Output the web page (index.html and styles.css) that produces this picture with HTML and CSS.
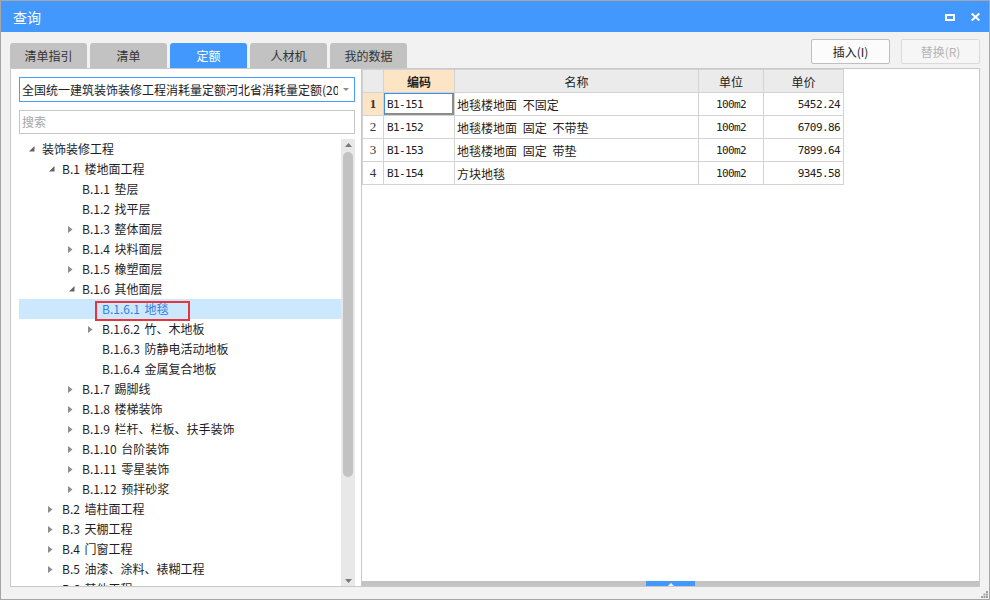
FILE: index.html
```html
<!DOCTYPE html>
<html lang="zh-CN">
<head>
<meta charset="utf-8">
<title>查询</title>
<link rel="stylesheet" href="styles.css">
</head>
<body>
<div class="window">
  <div class="titlebar">
    <span class="title">查询</span>
    <div class="win-ctrls">
      <svg width="10" height="7" viewBox="0 0 10 7"><rect x="1" y="1" width="8" height="5" fill="none" stroke="#fff" stroke-width="2"/></svg>
      <svg width="9" height="8" viewBox="0 0 9 8"><path d="M0.7 0.5 L8.3 7.5 M8.3 0.5 L0.7 7.5" stroke="#fff" stroke-width="2"/></svg>
    </div>
  </div>
  <div class="toolbar">
    <div class="tabs">
      <div class="tab">清单指引</div>
      <div class="tab">清单</div>
      <div class="tab active">定额</div>
      <div class="tab">人材机</div>
      <div class="tab">我的数据</div>
    </div>
    <div class="actions">
      <button class="btn">插入(I)</button>
      <button class="btn disabled">替换(R)</button>
    </div>
  </div>
  <div class="main">
    <div class="left">
      <div class="select">
        <span class="select-text">全国统一建筑装饰装修工程消耗量定额河北省消耗量定额(2012)</span>
        <svg class="caret" width="6" height="3" viewBox="0 0 6 3"><polygon points="0,0 6,0 3,3" fill="#8a8a8a"/></svg>
      </div>
      <div class="search">搜索</div>
      <div class="tree">
        <div class="tree-list">
          <div class="row l0"><span class="arr"><svg width="6" height="6" viewBox="0 0 6 6"><polygon points="5.5,0 5.5,5.5 0,5.5" fill="#646464"/></svg></span><span class="lbl">装饰装修工程</span></div>
          <div class="row l1"><span class="arr"><svg width="6" height="6" viewBox="0 0 6 6"><polygon points="5.5,0 5.5,5.5 0,5.5" fill="#646464"/></svg></span><span class="lbl">B.1 楼地面工程</span></div>
          <div class="row l2"><span class="arr"></span><span class="lbl">B.1.1 垫层</span></div>
          <div class="row l2"><span class="arr"></span><span class="lbl">B.1.2 找平层</span></div>
          <div class="row l2"><span class="arr"><svg class="col" width="5" height="7" viewBox="0 0 5 7"><polygon points="0,0 4.5,3.5 0,7" fill="#8c8c8c"/></svg></span><span class="lbl">B.1.3 整体面层</span></div>
          <div class="row l2"><span class="arr"><svg class="col" width="5" height="7" viewBox="0 0 5 7"><polygon points="0,0 4.5,3.5 0,7" fill="#8c8c8c"/></svg></span><span class="lbl">B.1.4 块料面层</span></div>
          <div class="row l2"><span class="arr"><svg class="col" width="5" height="7" viewBox="0 0 5 7"><polygon points="0,0 4.5,3.5 0,7" fill="#8c8c8c"/></svg></span><span class="lbl">B.1.5 橡塑面层</span></div>
          <div class="row l2"><span class="arr"><svg width="6" height="6" viewBox="0 0 6 6"><polygon points="5.5,0 5.5,5.5 0,5.5" fill="#646464"/></svg></span><span class="lbl">B.1.6 其他面层</span></div>
          <div class="row l3 selected"><span class="arr"></span><span class="lbl">B.1.6.1 地毯</span><span class="mark"></span></div>
          <div class="row l3"><span class="arr"><svg class="col" width="5" height="7" viewBox="0 0 5 7"><polygon points="0,0 4.5,3.5 0,7" fill="#8c8c8c"/></svg></span><span class="lbl">B.1.6.2 竹、木地板</span></div>
          <div class="row l3"><span class="arr"></span><span class="lbl">B.1.6.3 防静电活动地板</span></div>
          <div class="row l3"><span class="arr"></span><span class="lbl">B.1.6.4 金属复合地板</span></div>
          <div class="row l2"><span class="arr"><svg class="col" width="5" height="7" viewBox="0 0 5 7"><polygon points="0,0 4.5,3.5 0,7" fill="#8c8c8c"/></svg></span><span class="lbl">B.1.7 踢脚线</span></div>
          <div class="row l2"><span class="arr"><svg class="col" width="5" height="7" viewBox="0 0 5 7"><polygon points="0,0 4.5,3.5 0,7" fill="#8c8c8c"/></svg></span><span class="lbl">B.1.8 楼梯装饰</span></div>
          <div class="row l2"><span class="arr"><svg class="col" width="5" height="7" viewBox="0 0 5 7"><polygon points="0,0 4.5,3.5 0,7" fill="#8c8c8c"/></svg></span><span class="lbl">B.1.9 栏杆、栏板、扶手装饰</span></div>
          <div class="row l2"><span class="arr"><svg class="col" width="5" height="7" viewBox="0 0 5 7"><polygon points="0,0 4.5,3.5 0,7" fill="#8c8c8c"/></svg></span><span class="lbl">B.1.10 台阶装饰</span></div>
          <div class="row l2"><span class="arr"><svg class="col" width="5" height="7" viewBox="0 0 5 7"><polygon points="0,0 4.5,3.5 0,7" fill="#8c8c8c"/></svg></span><span class="lbl">B.1.11 零星装饰</span></div>
          <div class="row l2"><span class="arr"><svg class="col" width="5" height="7" viewBox="0 0 5 7"><polygon points="0,0 4.5,3.5 0,7" fill="#8c8c8c"/></svg></span><span class="lbl">B.1.12 预拌砂浆</span></div>
          <div class="row l1"><span class="arr"><svg class="col" width="5" height="7" viewBox="0 0 5 7"><polygon points="0,0 4.5,3.5 0,7" fill="#8c8c8c"/></svg></span><span class="lbl">B.2 墙柱面工程</span></div>
          <div class="row l1"><span class="arr"><svg class="col" width="5" height="7" viewBox="0 0 5 7"><polygon points="0,0 4.5,3.5 0,7" fill="#8c8c8c"/></svg></span><span class="lbl">B.3 天棚工程</span></div>
          <div class="row l1"><span class="arr"><svg class="col" width="5" height="7" viewBox="0 0 5 7"><polygon points="0,0 4.5,3.5 0,7" fill="#8c8c8c"/></svg></span><span class="lbl">B.4 门窗工程</span></div>
          <div class="row l1"><span class="arr"><svg class="col" width="5" height="7" viewBox="0 0 5 7"><polygon points="0,0 4.5,3.5 0,7" fill="#8c8c8c"/></svg></span><span class="lbl">B.5 油漆、涂料、裱糊工程</span></div>
          <div class="row l1"><span class="arr"><svg class="col" width="5" height="7" viewBox="0 0 5 7"><polygon points="0,0 4.5,3.5 0,7" fill="#8c8c8c"/></svg></span><span class="lbl">B.6 其他工程</span></div>
        </div>
        <div class="vscroll">
          <svg class="sarrow up" width="7" height="4" viewBox="0 0 7 4"><polygon points="3.5,0 7,4 0,4" fill="#787878"/></svg>
          <div class="thumb"></div>
          <svg class="sarrow down" width="7" height="4" viewBox="0 0 7 4"><polygon points="0,0 7,0 3.5,4" fill="#787878"/></svg>
        </div>
      </div>
    </div>
    <div class="right">
      <div class="grid">
        <div class="cell hdr"></div>
        <div class="cell hdr sel">编码</div>
        <div class="cell hdr">名称</div>
        <div class="cell hdr">单位</div>
        <div class="cell hdr">单价</div>

        <div class="cell num cur">1</div>
        <div class="cell code focus">B1-151</div>
        <div class="cell name">地毯楼地面 不固定</div>
        <div class="cell unit">100m2</div>
        <div class="cell price">5452.24</div>

        <div class="cell num">2</div>
        <div class="cell code">B1-152</div>
        <div class="cell name">地毯楼地面 固定 不带垫</div>
        <div class="cell unit">100m2</div>
        <div class="cell price">6709.86</div>

        <div class="cell num">3</div>
        <div class="cell code">B1-153</div>
        <div class="cell name">地毯楼地面 固定 带垫</div>
        <div class="cell unit">100m2</div>
        <div class="cell price">7899.64</div>

        <div class="cell num">4</div>
        <div class="cell code">B1-154</div>
        <div class="cell name">方块地毯</div>
        <div class="cell unit">100m2</div>
        <div class="cell price">9345.58</div>
      </div>
      <div class="hbar">
        <div class="hbar-handle"><svg width="6" height="3" viewBox="0 0 6 3"><polygon points="3,0 6,3 0,3" fill="#fff"/></svg></div>
      </div>
    </div>
  </div>
  <div class="footer">
    <svg class="grip" width="7" height="7" viewBox="0 0 7 7"><g fill="#a3a3a3"><rect x="5" y="0" width="2" height="2"/><rect x="2.5" y="2.5" width="2" height="2"/><rect x="5" y="2.5" width="2" height="2"/><rect x="0" y="5" width="2" height="2"/><rect x="2.5" y="5" width="2" height="2"/><rect x="5" y="5" width="2" height="2"/></g></svg>
  </div>
</div>
</body>
</html>
```

FILE: styles.css
```css
* { box-sizing: border-box; }
html, body { margin: 0; padding: 0; }
body {
  width: 990px;
  height: 600px;
  overflow: hidden;
  font-family: "Noto Sans CJK SC", "Microsoft YaHei", sans-serif;
  font-size: 12px;
  color: #222;
  background: #f2f2f2;
}
.window {
  width: 990px;
  height: 600px;
  border: 1px solid #a6a6a6;
  display: flex;
  flex-direction: column;
  background: #f2f2f2;
}
.titlebar {
  height: 31px;
  flex: none;
  background: #4398fd;
  color: #fff;
  display: flex;
  align-items: center;
  justify-content: space-between;
  padding: 0 9px 0 12px;
}
.title { font-size: 14px; line-height: 1; }
.win-ctrls { display: flex; align-items: center; gap: 16px; padding-top: 1px; }
.win-ctrls svg { display: block; }

.toolbar {
  height: 36px;
  flex: none;
  display: flex;
  justify-content: space-between;
  padding: 0 9px;
}
.tabs { display: flex; gap: 3px; align-self: flex-end; }
.tab {
  width: 77px;
  height: 25px;
  background: #c2c2c2;
  border-radius: 3px 3px 0 0;
  display: flex;
  align-items: center;
  justify-content: center;
  font-size: 12px;
  color: #333;
}
.tab.active { background: #4398fd; color: #fff; }
.actions { display: flex; gap: 11px; padding-top: 7px; }
.btn {
  width: 79px;
  height: 25px;
  border: 1px solid #bfbfbf;
  border-radius: 2px;
  background: #fcfcfc;
  font-family: inherit;
  font-size: 12px;
  color: #222;
  padding: 0;
}
.btn.disabled { border-color: #dadada; color: #b4b4b4; background: #f6f6f6; }

.main {
  height: 519px;
  flex: none;
  margin: 0 9px;
  display: flex;
}
.left {
  width: 351px;
  background: #fff;
  border: 1px solid #c8c8c8;
  border-right: none;
  padding: 8px 6px 0 8px;
  display: flex;
  flex-direction: column;
}
.select {
  height: 25px;
  flex: none;
  border: 1px solid #4a9bf5;
  display: flex;
  align-items: center;
  padding-left: 2px;
}
.select-text {
  width: 316px;
  overflow: hidden;
  white-space: nowrap;
  color: #222;
}
.caret { margin-left: auto; margin-right: 5px; display: block; }
.search {
  margin-top: 8px;
  height: 24px;
  flex: none;
  border: 1px solid #c6c6c6;
  padding-left: 2px;
  line-height: 22px;
  color: #a6a6a6;
}
.tree {
  margin-top: 5px;
  flex: 1;
  display: flex;
  overflow: hidden;
}
.tree-list { flex: 1; overflow: hidden; }
.row {
  height: 20px;
  display: flex;
  align-items: center;
  white-space: nowrap;
  position: relative;
  color: #1e1e1e;
}
.row.l0 { padding-left: 10px; }
.row.l1 { padding-left: 30px; }
.row.l2 { padding-left: 50px; }
.row.l3 { padding-left: 70px; }
.arr { width: 13px; height: 20px; flex: none; display: flex; align-items: center; }
.arr svg { display: block; }
.arr svg.col { margin-left: -1px; }
.lbl { line-height: 20px; word-spacing: 2px; }
.row.selected { background: #cce8ff; }
.row.selected .lbl { color: #2f80e6; }
.mark {
  position: absolute;
  left: 76px;
  top: 2px;
  width: 95px;
  height: 20px;
  border: 2px solid #e8353d;
}
.vscroll {
  width: 14px;
  flex: none;
  background: #e8e8e8;
  display: flex;
  flex-direction: column;
  align-items: center;
}
.sarrow { display: block; flex: none; }
.sarrow.up { margin-top: 4px; }
.sarrow.down { margin-top: auto; margin-bottom: 3px; }
.thumb {
  margin-top: 5px;
  width: 10px;
  height: 325px;
  border-radius: 5px;
  background: #c2c2c2;
}

.right {
  width: 619px;
  background: #fff;
  border: 1px solid #c8c8c8;
  display: flex;
  flex-direction: column;
}
.grid {
  width: 482px;
  display: grid;
  grid-template-columns: 21px 71px 244px 65px 80px;
  grid-auto-rows: 23px;
  border-left: 1px solid #d3d3d3;
  border-top: 1px solid #d3d3d3;
}
.cell {
  border-right: 1px solid #d3d3d3;
  border-bottom: 1px solid #d3d3d3;
  display: flex;
  align-items: center;
  white-space: nowrap;
  overflow: hidden;
}
.hdr { background: #ebebeb; justify-content: center; color: #222; }
.hdr.sel { background: #fde4c4; font-weight: bold; }
.num {
  justify-content: center;
  font-family: "Liberation Serif", serif;
  font-size: 13px;
  color: #333;
}
.num.cur { background: #fde4c4; font-weight: bold; }
.code, .unit, .price {
  font-family: "DejaVu Sans Mono", monospace;
  font-size: 11px;
  letter-spacing: -0.6px;
  color: #222;
}
.code { padding-left: 3px; }
.code.focus { box-shadow: inset 1px 1px 0 #3d8ef2, inset -2px -2px 0 #8c8c8c; }
.name { padding-left: 2px; word-spacing: 3px; }
.unit { justify-content: center; }
.price { justify-content: flex-end; padding-right: 3px; }
.hbar {
  margin-top: auto;
  height: 5px;
  background: #c3c3c3;
  display: flex;
}
.hbar-handle {
  margin-left: 284px;
  width: 49px;
  height: 5px;
  background: #4398fd;
  display: flex;
  align-items: flex-end;
  justify-content: center;
}
.hbar-handle svg { display: block; }
.footer {
  flex: 1;
  display: flex;
  justify-content: flex-end;
  align-items: flex-end;
  padding: 0 1px 1px 0;
}
.grip { display: block; }
```
